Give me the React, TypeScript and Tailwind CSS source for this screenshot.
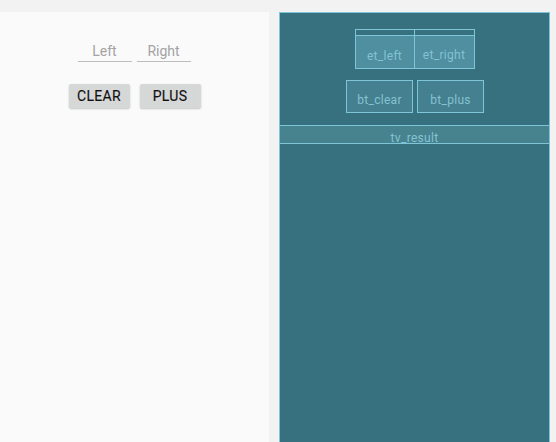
import React from "react";

const bpText = "text-[#84c2d2] text-[12px] leading-none tracking-[0.3px]";

export default function App() {
  return (
    <div
      className="w-[556px] h-[442px] bg-[#f2f2f2] flex pt-[12px] overflow-hidden"
      style={{ fontFamily: "Roboto, 'Noto Sans', sans-serif" }}
    >
      {/* Design panel */}
      <div className="w-[269px] shrink-0 h-full bg-[#fafafa] flex flex-col items-center">
        <div className="flex gap-[5px] mt-[32px] ml-[-1px]">
          <div className="w-[54px] h-[18px] border-b-[1.5px] border-[#bdbdbd] flex items-start justify-center">
            <span className="text-[14px] leading-none text-[#a3a3a3]">Left</span>
          </div>
          <div className="w-[54px] h-[18px] border-b-[1.5px] border-[#bdbdbd] flex items-start justify-center">
            <span className="text-[14px] leading-none text-[#a3a3a3]">Right</span>
          </div>
        </div>
        <div className="flex gap-[10px] mt-[22px]">
          <div className="w-[61px] h-[24px] bg-[#d6d7d7] rounded-[2px] shadow-[0_1px_2px_rgba(0,0,0,0.22)] flex items-center justify-center text-[14px] font-normal text-[#111] tracking-[0.3px] [-webkit-text-stroke:0.15px_#111]">
            CLEAR
          </div>
          <div className="w-[61px] h-[24px] bg-[#d6d7d7] rounded-[2px] shadow-[0_1px_2px_rgba(0,0,0,0.22)] flex items-center justify-center text-[14px] font-normal text-[#111] tracking-[0.3px] [-webkit-text-stroke:0.15px_#111]">
            PLUS
          </div>
        </div>
      </div>

      {/* Blueprint panel */}
      <div className="ml-[10px] shrink-0 w-[271px] h-[440px] border border-[#7fc5d8] bg-[#37707f] flex flex-col items-center">
        <div className="flex mt-[16px]">
          <div className="w-[60px] h-[40px] border border-[#7fc5d8] flex flex-col">
            <div className="h-[6px] border-b border-[#7fc5d8]" />
            <div className={`flex-1 bg-[#4f8fa0] flex justify-center pt-[14px] ${bpText}`}>et_left</div>
          </div>
          <div className="w-[60px] h-[40px] border border-l-0 border-[#7fc5d8] flex flex-col">
            <div className="h-[6px] border-b border-[#7fc5d8]" />
            <div className={`flex-1 bg-[#4f8fa0] flex justify-center pt-[13px] ${bpText}`}>et_right</div>
          </div>
        </div>
        <div className="flex gap-[4px] mt-[11px] ml-[1px]">
          <div className={`w-[67px] h-[33px] border border-[#7fc5d8] bg-[#44808f] flex justify-center pt-[13px] ${bpText}`}>bt_clear</div>
          <div className={`w-[67px] h-[33px] border border-[#7fc5d8] bg-[#44808f] flex justify-center pt-[13px] ${bpText}`}>bt_plus</div>
        </div>
        <div className={`w-full h-[19px] mt-[12px] border-y border-[#7fc5d8] bg-[#46838f] flex justify-center pt-[6px] ${bpText}`}>
          tv_result
        </div>
      </div>
    </div>
  );
}
